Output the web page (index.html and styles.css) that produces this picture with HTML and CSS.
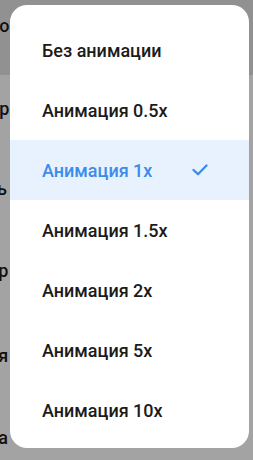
FILE: index.html
```html
<!DOCTYPE html>
<html lang="ru">
<head>
<meta charset="utf-8">
<link rel="stylesheet" href="styles.css">
</head>
<body>
<div class="page">
  <div class="band"><span class="frag">Во</span></div>
  <div class="row r1"><span class="frag">Вр</span></div>
  <div class="row r2"><span class="frag">ть</span></div>
  <div class="row r3"><span class="frag">ор</span></div>
  <div class="row r4"><span class="frag">ня</span></div>
  <div class="row r5"><span class="frag">ва</span></div>
</div>
<div class="dialog">
  <div class="item">Без анимации</div>
  <div class="item">Анимация 0.5x</div>
  <div class="item selected">Анимация 1x
    <svg class="check" width="16" height="12" viewBox="0 0 16 12"><polyline points="1.5,6 6,10.2 14.5,1.5" fill="none" stroke="#3a8ce8" stroke-width="2.3" stroke-linecap="round" stroke-linejoin="round"/></svg>
  </div>
  <div class="item">Анимация 1.5x</div>
  <div class="item">Анимация 2x</div>
  <div class="item">Анимация 5x</div>
  <div class="item">Анимация 10x</div>
</div>
</body>
</html>
```
FILE: styles.css
```css
html, body {
  margin: 0;
  padding: 0;
}
body {
  width: 253px;
  height: 460px;
  overflow: hidden;
  position: relative;
  background: #a3a3a3;
  font-family: Roboto, "Noto Sans", sans-serif;
}
.page {
  display: flex;
  flex-direction: column;
}
.band {
  height: 75px;
  background: #919191;
  display: flex;
  align-items: center;
  padding-bottom: 25px;
  box-sizing: border-box;
}
.row {
  display: flex;
  align-items: center;
  flex: none;
}
.r1 { height: 66px; }
.r2 { height: 94px; }
.r3 { height: 70px; }
.r4 { height: 100px; }
.r5 { height: 64px; }
.frag {
  font-size: 18px;
  font-weight: 500;
  color: #111;
  margin-left: -12px;
}
.dialog {
  position: absolute;
  left: 10px;
  top: 5px;
  width: 239px;
  height: 443px;
  box-sizing: border-box;
  border-radius: 17px;
  background: #fff;
  padding-top: 15px;
  display: flex;
  flex-direction: column;
}
.item {
  height: 60px;
  flex: none;
  display: flex;
  align-items: center;
  justify-content: space-between;
  padding: 0 41px 0 32px;
  font-size: 18px;
  font-weight: 500;
  color: #1b1b1b;
}
.selected {
  background: #e8f2fe;
  color: #3a8ce8;
}
.check {
  display: block;
}
```
